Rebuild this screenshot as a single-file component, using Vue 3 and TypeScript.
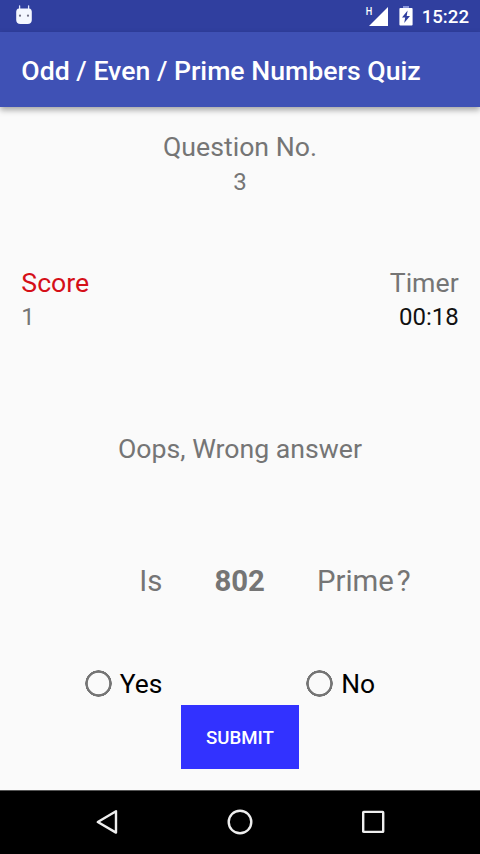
<script setup lang="ts">
import { ref } from 'vue'

const questionNo = ref(3)
const score = ref(1)
const timer = ref('00:18')
const feedback = ref('Oops, Wrong answer')
const candidate = ref(802)
const answer = ref<string | null>(null)
const options: string[] = ['Yes', 'No']
</script>

<template>
  <div class="screen">
    <header class="status">
      <svg class="droid" width="18" height="20" viewBox="0 0 18 20">
        <path d="M4.6 .8V4 M13.6 .8V4" stroke="#dfe5ff" stroke-width="1.3" stroke-linecap="round" />
        <path d="M4 3.4H14Q16.8 3.8 16.8 7V15Q16.6 18.8 12.6 19H5.4Q1.4 18.8 1.2 15V7Q1.2 3.8 4 3.4Z" fill="#f4f7ff" />
        <circle cx="5" cy="10.7" r="1.1" fill="#6d6c80" />
        <circle cx="13" cy="10.7" r="1.1" fill="#6d6c80" />
      </svg>
      <div class="indicators">
        <span class="network">H</span>
        <svg class="signal" width="19" height="19" viewBox="0 0 19 19"><path d="M19 0V19H0Z" fill="#fff" /></svg>
        <svg class="battery" width="14" height="20" viewBox="0 0 14 20">
          <path d="M4 0H10V2H4Z" fill="#8c98dc" />
          <path d="M1.4 2H12.6Q13.6 2 13.6 3V18.6Q13.6 19.6 12.6 19.6H1.4Q.4 19.6 .4 18.6V3Q.4 2 1.4 2Z" fill="#fff" />
          <path d="M8.6 4.6L3 11.4H6.2L5.2 17L11 9.9H7.7Z" fill="#303f9f" />
        </svg>
        <span class="clock">15:22</span>
      </div>
    </header>
    <div class="toolbar"><h1>Odd / Even / Prime Numbers Quiz</h1></div>

    <main>
      <section class="question-no">
        <div class="label">Question No.</div>
        <div class="value">{{ questionNo }}</div>
      </section>
      <section class="stats">
        <div>
          <div class="label score">Score</div>
          <div class="value">{{ score }}</div>
        </div>
        <div class="right">
          <div class="label">Timer</div>
          <div class="value time">{{ timer }}</div>
        </div>
      </section>
      <p class="feedback">{{ feedback }}</p>
      <section class="prompt">
        <span class="is">Is</span>
        <strong>{{ candidate }}</strong>
        <span class="prime">Prime<span class="mark">?</span></span>
      </section>
      <section class="options">
        <label v-for="option in options" :key="option">
          <input v-model="answer" type="radio" name="answer" :value="option" />
          <span>{{ option }}</span>
        </label>
      </section>
      <button type="button">SUBMIT</button>
    </main>

    <nav>
      <svg width="28" height="28" viewBox="0 0 28 28"><path d="M23 3.2V24.6L4.8 14Z" /></svg>
      <svg width="28" height="28" viewBox="0 0 28 28"><circle cx="14" cy="14" r="11.3" /></svg>
      <svg width="28" height="28" viewBox="0 0 28 28"><rect x="4.2" y="3.9" width="20" height="20" rx=".5" /></svg>
    </nav>
  </div>
</template>

<style>
body {
  margin: 0;
}
</style>

<style scoped>
.screen {
  display: flex;
  flex-direction: column;
  width: 480px;
  height: 854px;
  overflow: hidden;
  background: #fafafa;
  color: #757575;
  font-family: Roboto, sans-serif;
}
.status {
  display: flex;
  justify-content: space-between;
  flex: none;
  box-sizing: border-box;
  height: 32px;
  padding: 5px 11px 0 15px;
  background: #303f9f;
  color: #fff;
}
.indicators {
  display: flex;
  align-items: flex-start;
}
.network {
  font-size: 11.5px;
  line-height: 13px;
  font-weight: 500;
  transform: scaleX(0.8);
}
.signal {
  margin: 2px 0 0 -5px;
}
.signal + .battery {
  margin: 1px 0 0 11px;
}
.clock {
  margin-left: 9px;
  font-size: 18.67px;
  line-height: 24px;
  font-weight: 500;
}
.toolbar {
  position: relative;
  display: flex;
  align-items: center;
  flex: none;
  height: 74.67px;
  padding: 0 21.33px;
  background: #3f51b5;
  box-shadow: 0 3px 6px rgba(0, 0, 0, 0.35);
}
h1 {
  margin: 4px 0 0;
  color: #fff;
  font-size: 26.67px;
  line-height: 34px;
  font-weight: 500;
  white-space: nowrap;
}
main {
  display: flex;
  flex-direction: column;
  flex: 1;
  padding: 23.33px 21.33px 0;
}
.label,
.feedback {
  font-size: 26.67px;
  line-height: 34px;
}
.value {
  font-size: 24px;
  line-height: 34px;
}
.question-no {
  text-align: center;
}
.question-no .value {
  margin-top: 1px;
}
.stats {
  display: flex;
  justify-content: space-between;
  margin-top: 67px;
}
.right {
  text-align: right;
}
.score {
  color: #d50f18;
}
.time {
  color: #111;
}
.feedback {
  margin: 98px 0 0;
  text-align: center;
}
.prompt {
  display: flex;
  margin-top: 95px;
  padding-left: 118px;
  font-size: 29.33px;
  line-height: 40px;
}
strong {
  margin-left: 52px;
  font-weight: 700;
}
.prime {
  margin-left: 52px;
}
.mark {
  margin-left: 3px;
}
.options {
  display: grid;
  grid-template-columns: 221.5px auto;
  margin-top: 66px;
  padding-left: 63.3px;
}
label {
  display: flex;
  align-items: center;
  gap: 8px;
  color: #000;
  font-size: 26.4px;
  line-height: 34px;
}
input {
  appearance: none;
  width: 27px;
  height: 27px;
  margin: 0;
  border-radius: 50%;
  background: radial-gradient(circle closest-side, transparent 10.3px, #757575 11.1px, #757575 13px, transparent 13.5px);
}
input:checked {
  background: radial-gradient(circle closest-side, #757575 6px, transparent 6.7px, transparent 10.3px, #757575 11.1px, #757575 13px, transparent 13.5px);
}
button {
  align-self: center;
  width: 118px;
  height: 64px;
  margin-top: 4px;
  padding: 2px 0 0;
  border: 0;
  background: #3232ff;
  color: #fff;
  font: 500 18.67px Roboto, sans-serif;
}
nav {
  display: flex;
  justify-content: center;
  gap: 105.3px;
  flex: none;
  box-sizing: border-box;
  height: 64px;
  padding-top: 17px;
  border-top: 1px solid #555;
  background: #000;
}
nav svg {
  fill: none;
  stroke: #eee;
  stroke-width: 2.4;
  stroke-linejoin: round;
}
</style>
